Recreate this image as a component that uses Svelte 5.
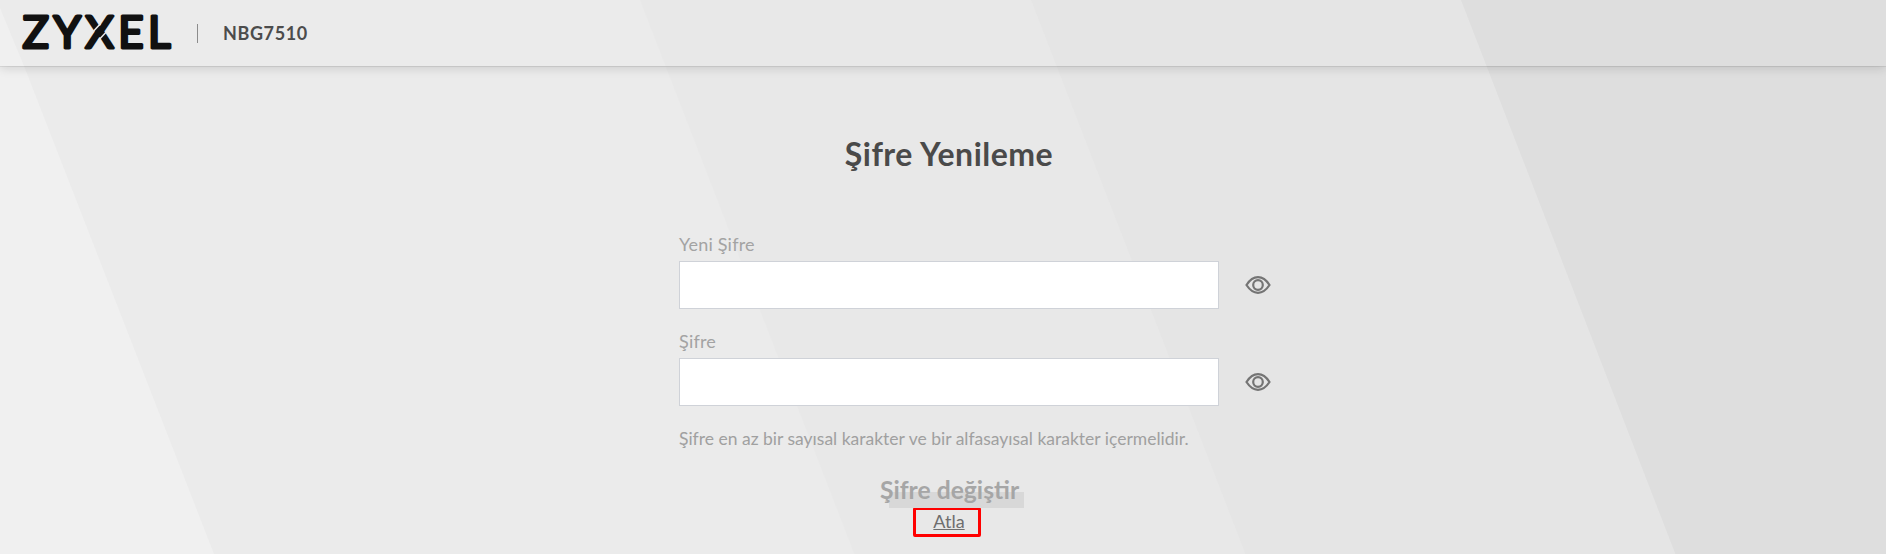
<script lang="ts">
  // Background bands: every edge runs at the same slant.
  const SLANT = 0.387;
  const H = 554;
  const bands = [
    { x: 640, fill: '#e8e8e8' },
    { x: 1031, fill: '#e5e5e5' },
    { x: 1461, fill: '#dedede' },
  ];
  const pts = (x: number) => `${x},0 2200,0 2200,${H} ${x + SLANT * H},${H}`;
  const fields = [
    { label: 'Yeni Şifre', id: 'new' },
    { label: 'Şifre', id: 'confirm' },
  ];
</script>

<svg class="bg" width="1886" height="554" aria-hidden="true">
  <rect width="1886" height="554" fill="#f0f0f0" />
  <polygon points="0,0 1886,0 1886,554 214,554 24,66 0,8" fill="#ebebeb" />
  {#each bands as b (b.x)}
    <polygon points={pts(b.x)} fill={b.fill} />
  {/each}
</svg>

<header>
  <svg class="logo" width="176" height="66" viewBox="0 0 176 66">
    <text x="1.5" y="47.5">ZYXEL</text>
    <line class="cut" x1="77.3" y1="40.5" x2="86.9" y2="30.3" />
    <line class="cut" x1="70.1" y1="33.7" x2="79.7" y2="23.5" />
  </svg>
  <span class="divider"></span>
  <span class="model">NBG7510</span>
</header>

<main>
  <h1>Şifre Yenileme</h1>
  {#each fields as f (f.id)}
    <label for={f.id}>{f.label}</label>
    <div class="row">
      <input id={f.id} type="password" />
      <svg class="eye" width="26" height="18" viewBox="0 0 26 18" fill="none" stroke="#747474" stroke-width="2.2">
        <path d="M1.5 9C5 3.6 8.8 1.2 13 1.2S21 3.6 24.5 9C21 14.4 17.2 16.8 13 16.8S5 14.4 1.5 9Z" />
        <circle cx="13" cy="9" r="4.8" />
      </svg>
    </div>
  {/each}
  <p class="hint">Şifre en az bir sayısal karakter ve bir alfasayısal karakter içermelidir.</p>
  <div class="actions">
    <button type="button"><span>Şifre değiştir</span></button>
    <a href="#skip">Atla</a>
  </div>
</main>

<style>
  :global(body) {
    margin: 0;
    height: 554px;
    overflow: hidden;
    background: #e8e8e8;
    font-family: "Lato", "Open Sans", sans-serif;
  }
  .bg {
    position: absolute;
    top: 0;
    left: 0;
  }
  header {
    position: relative;
    height: 66px;
    display: flex;
    align-items: center;
    box-shadow: 0 1px 0 rgba(0, 0, 0, 0.07), 0 2px 10px rgba(0, 0, 0, 0.14);
    padding-left: 21px;
  }
  .logo {
    flex: none;
  }
  .logo text {
    font-family: "Lato", sans-serif;
    font-size: 44px;
    font-weight: 400;
    letter-spacing: 4.4px;
    fill: #111;
    stroke: #111;
    stroke-width: 3;
    stroke-linejoin: round;
  }
  .cut {
    stroke: #ebebeb;
    stroke-width: 1.5;
  }
  .divider {
    width: 1px;
    height: 19px;
    background: #8c8c8c;
  }
  .model {
    margin-left: 25px;
    font-size: 18px;
    font-weight: 700;
    letter-spacing: 0.6px;
    color: #4c4c4c;
  }
  main {
    position: relative;
    width: 540px;
    margin-left: 679px;
    display: flex;
    flex-direction: column;
  }
  h1 {
    margin: 68px 0 0;
    height: 40px;
    font-size: 32px;
    line-height: 40px;
    font-weight: 700;
    letter-spacing: 0.5px;
    text-align: center;
    color: #4a4a4a;
  }
  label {
    margin-top: 57px;
    height: 30px;
    font-size: 18px;
    line-height: 26px;
    letter-spacing: 0.2px;
    color: #a3a3a3;
  }
  label:nth-of-type(2) {
    margin-top: 19px;
  }
  .row {
    display: flex;
    align-items: center;
  }
  input {
    flex: none;
    box-sizing: border-box;
    width: 540px;
    height: 48px;
    padding: 0 10px;
    background: #fff;
    border: 1px solid #cfd2d8;
    outline: none;
  }
  .eye {
    flex: none;
    margin-left: 26px;
  }
  .hint {
    margin: 21px 0 0;
    font-size: 17.5px;
    line-height: 24px;
    color: #a0a0a0;
  }
  .actions {
    display: flex;
    flex-direction: column;
    align-items: center;
    margin-top: 41px;
  }
  button {
    position: relative;
    left: 7.5px;
    box-sizing: border-box;
    width: 135px;
    height: 16px;
    padding: 0 0 16px;
    border: none;
    background: #d8d8d8;
    font: 700 24.7px/0 "Lato", sans-serif;
    text-align: left;
    text-indent: -9px;
    color: #a6a6a6;
    white-space: nowrap;
    overflow: visible;
  }
  button span {
    position: relative;
    top: -2px;
  }
  a {
    box-sizing: border-box;
    width: 68px;
    height: 30px;
    margin: -1px 4px 0 0;
    padding-left: 4px;
    border: 3px solid #f00;
    border-radius: 2px;
    font-size: 18px;
    line-height: 22px;
    text-align: center;
    color: #6e6e6e;
  }
</style>
